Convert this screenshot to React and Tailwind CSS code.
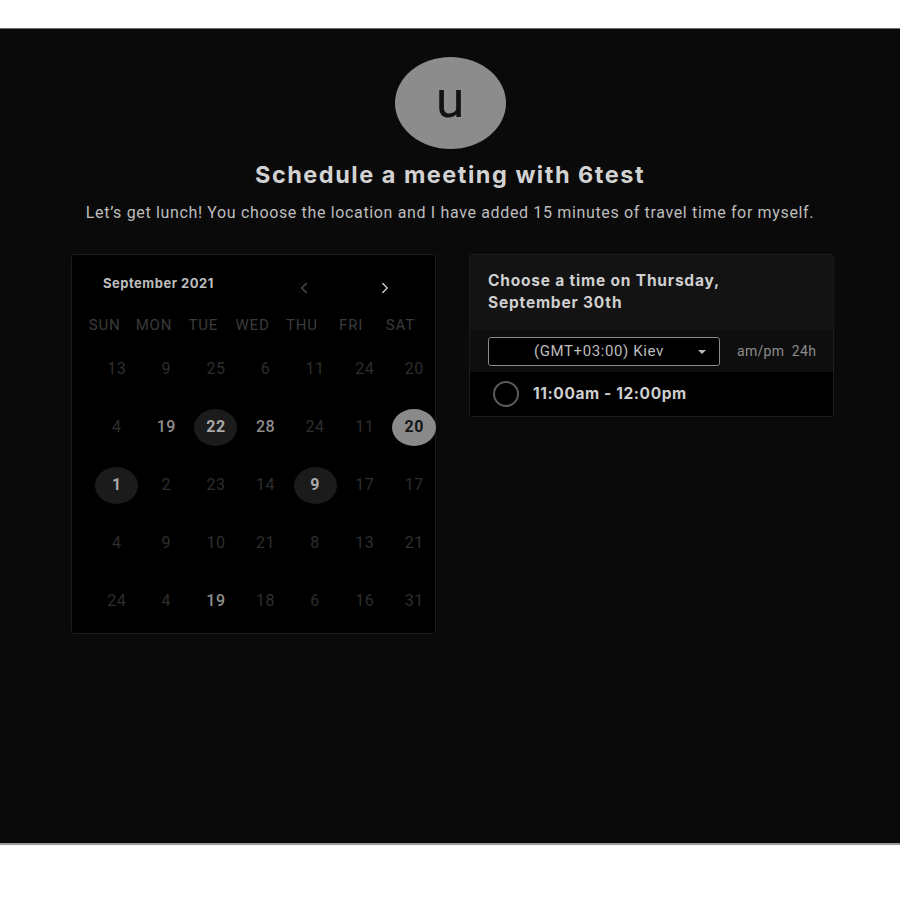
import { ChevronLeft, ChevronRight } from 'lucide-react';

const weekdays = ['SUN', 'MON', 'TUE', 'WED', 'THU', 'FRI', 'SAT'];

// d = dim, b = bright, h = highlighted (dark pill), s = selected (grey pill)
const weeks = [
  [['13', 'd'], ['9', 'd'], ['25', 'd'], ['6', 'd'], ['11', 'd'], ['24', 'd'], ['20', 'd']],
  [['4', 'd'], ['19', 'b'], ['22', 'h'], ['28', 'b'], ['24', 'd'], ['11', 'd'], ['20', 's']],
  [['1', 'h'], ['2', 'd'], ['23', 'd'], ['14', 'd'], ['9', 'h'], ['17', 'd'], ['17', 'd']],
  [['4', 'd'], ['9', 'd'], ['10', 'd'], ['21', 'd'], ['8', 'd'], ['13', 'd'], ['21', 'd']],
  [['24', 'd'], ['4', 'd'], ['19', 'b'], ['18', 'd'], ['6', 'd'], ['16', 'd'], ['31', 'd']],
];

function Day({ value, kind }) {
  if (kind === 's') {
    return (
      <span className="flex h-[37px] w-[44px] items-center justify-center rounded-[50%] bg-[#8a8a8a] text-[16px] font-bold tracking-[0.5px] text-[#151515]">
        {value}
      </span>
    );
  }
  if (kind === 'h') {
    return (
      <span className="flex h-[37px] w-[43px] items-center justify-center rounded-[50%] bg-[#1b1b1b] text-[16px] font-bold tracking-[0.5px] text-[#a8a8a8]">
        {value}
      </span>
    );
  }
  return (
    <span
      className={
        kind === 'b'
          ? 'text-[16px] font-medium tracking-[0.5px] text-[#8e8e8e]'
          : 'text-[16px] tracking-[0.5px] text-[#2e2e2e]'
      }
    >
      {value}
    </span>
  );
}

function Calendar() {
  return (
    <div className="h-[380px] w-[365px] shrink-0 rounded-[3px] border border-[#1c1c1c] bg-black pt-[14px]">
      {/* Month header */}
      <div className="flex h-[30px] items-center">
        <div className="w-[220px] pl-[31px] font-['Inter',sans-serif] text-[13px] font-bold tracking-[0.5px] text-[#bdbdbd]">
          September 2021
        </div>
        <div className="mt-[7px] flex w-[24px] justify-center text-[#4a4a4a]">
          <ChevronLeft size={18} strokeWidth={2} />
        </div>
        <div className="ml-[57px] mt-[7px] flex w-[24px] justify-center text-[#c4c4c4]">
          <ChevronRight size={18} strokeWidth={2} />
        </div>
      </div>

      {/* Weekdays */}
      <div className="ml-[8px] mt-[11px] grid h-[30px] w-[345px] grid-cols-7 items-center">
        {weekdays.map((d) => (
          <div key={d} className="text-center text-[15px] tracking-[0.8px] text-[#3b3b3b]">
            {d}
          </div>
        ))}
      </div>

      {/* Days */}
      <div className="ml-[20px] w-[347px]">
        {weeks.map((week, i) => (
          <div key={i} className="grid h-[58px] grid-cols-7">
            {week.map(([v, k], j) => (
              <div key={j} className="flex items-center justify-center">
                <Day value={v} kind={k} />
              </div>
            ))}
          </div>
        ))}
      </div>
    </div>
  );
}

function TimePanel() {
  return (
    <div className="w-[365px] shrink-0 self-start overflow-hidden rounded-[3px] border border-[#1c1c1c] bg-black">
      <div className="h-[75px] bg-[#131313] px-[18px] pt-[15px] font-['Inter',sans-serif] text-[15.5px] font-bold leading-[22px] tracking-[0.8px] text-[#cfcfcf]">
        Choose a time on Thursday,
        <br />
        September 30th
      </div>
      <div className="flex h-[42px] items-center bg-[#0e0e0e] pl-[18px]">
        <div className="relative flex h-[29px] w-[232px] items-center rounded-[3px] border border-[#8a8a8a] bg-black pl-[45px] text-[15px] tracking-[0.6px] text-[#bcbcbc]">
          (GMT+03:00) Kiev
          <span className="absolute right-[13px] top-[12px] h-0 w-0 border-x-[4px] border-t-[4px] border-x-transparent border-t-[#bcbcbc]" />
        </div>
        <div className="ml-[17px] text-[14px] tracking-[0.3px] text-[#8c8c8c]">
          am/pm&nbsp;&nbsp;24h
        </div>
      </div>
      <div className="flex h-[44px] items-center bg-black pl-[23px]">
        <span className="h-[26px] w-[26px] rounded-full border-2 border-[#5a5a5a]" />
        <span className="ml-[14px] font-['Inter',sans-serif] text-[15.5px] font-bold tracking-[0.6px] text-[#cfcfcf]">
          11:00am - 12:00pm
        </span>
      </div>
    </div>
  );
}

export default function App() {
  return (
    <div className="flex h-[900px] w-full flex-col bg-white font-['Roboto',sans-serif]">
      <div className="h-[28px] shrink-0 bg-white" />
      <main className="flex h-[817px] shrink-0 flex-col items-center border-t border-b-2 border-t-[#6a6a6a] border-b-[#9a9a9a] bg-[#0a0a0a] pt-[28px]">
        {/* Avatar */}
        <div className="flex h-[92px] w-[111px] items-center justify-center rounded-[50%] bg-[#8c8c8c]">
          <span className="-mt-[6px] text-[52px] leading-none text-[#121212]">u</span>
        </div>

        {/* Title */}
        <h1 className="mt-[13px] font-['Inter',sans-serif] text-[23.5px] font-bold leading-[26px] tracking-[1.5px] text-[#d2d2d2]">
          Schedule a meeting with 6test
        </h1>
        <p className="mt-[15px] text-[16px] leading-[20px] tracking-[0.65px] text-[#bdbdbd]">
          Let’s get lunch! You choose the location and I have added 15 minutes of travel time for myself.
        </p>

        {/* Cards */}
        <div className="mt-[31px] flex w-full gap-[33px] pl-[71px]">
          <Calendar />
          <TimePanel />
        </div>
      </main>
      <div className="flex-1 bg-white" />
    </div>
  );
}
